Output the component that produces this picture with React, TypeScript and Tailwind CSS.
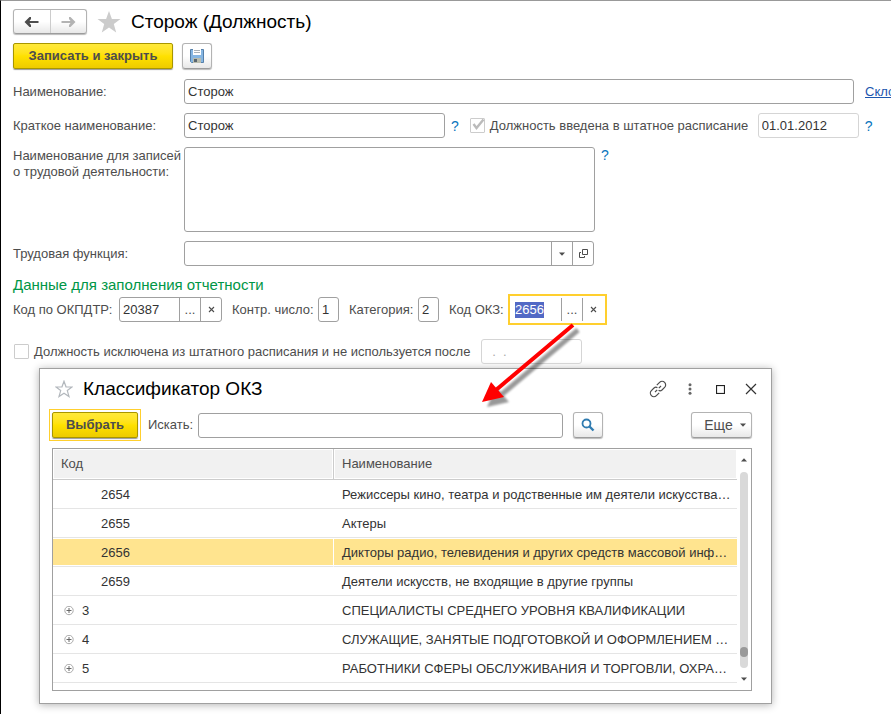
import { useEffect, useRef } from 'react';
import type { ReactNode } from 'react';

const rows = [
    { code: '2654', name: 'Режиссеры кино, театра и родственные им деятели искусства…', group: false },
    { code: '2655', name: 'Актеры', group: false },
    { code: '2656', name: 'Дикторы радио, телевидения и других средств массовой инф…', group: false },
    { code: '2659', name: 'Деятели искусств, не входящие в другие группы', group: false },
    { code: '3', name: 'СПЕЦИАЛИСТЫ СРЕДНЕГО УРОВНЯ КВАЛИФИКАЦИИ', group: true },
    { code: '4', name: 'СЛУЖАЩИЕ, ЗАНЯТЫЕ ПОДГОТОВКОЙ И ОФОРМЛЕНИЕМ …', group: true },
    { code: '5', name: 'РАБОТНИКИ СФЕРЫ ОБСЛУЖИВАНИЯ И ТОРГОВЛИ, ОХРА…', group: true },
];

const field = 'h-[25px] rounded-[3px] border border-[#a0a0a0] bg-white px-[3px] text-[#333] outline-none';
const grayButton =
    'flex items-center justify-center rounded-[3px] border border-[#b3b3b3] border-b-[#9c9c9c] bg-linear-to-b from-white from-50% to-[#e8e8e8] shadow-[0_1px_1px_#bbb]';
const yellowButton =
    'h-[26px] rounded-[2px] border border-[#a89600] bg-linear-to-b from-[#ffe93a] via-[#ffe100] to-[#edcb00] text-[13px] font-bold text-[#4d4d4d] shadow-[0_1px_1px_#999]';

function Help() {
    return (
        <button aria-label="Справка" className="text-[14px] leading-4 text-[#0a75bd]">
            ?
        </button>
    );
}

function Arrow({ right = false }: { right?: boolean }) {
    return (
        <svg width="15" height="12" viewBox="0 0 15 12" className={right ? 'rotate-180 text-[#b3b3b3]' : 'text-[#4d4d4d]'}>
            <path d="M0.500 6 5.500 1H7V3L5.500 5H14.500V7H5.500L7 9V11H5.500Z" fill="currentColor" />
        </svg>
    );
}

function Triangle({ up = false }: { up?: boolean }) {
    return (
        <svg width="6" height="4" viewBox="0 0 6 4" className={up ? 'rotate-180' : ''}>
            <path d="M0 0.500H6L3 3.800Z" fill="#4d4d4d" />
        </svg>
    );
}

function InnerButton({ label, children }: { label: string; children: ReactNode }) {
    return (
        <button
            aria-label={label}
            className="flex w-[21px] shrink-0 items-center justify-center self-stretch border-l border-[#a0a0a0] text-[13px] text-[#4d4d4d]"
        >
            {children}
        </button>
    );
}

function Cross() {
    return (
        <svg width="7" height="7" viewBox="0 0 7 7">
            <path d="M1 1 6 6M6 1 1 6" stroke="#4d4d4d" strokeWidth="1.100" />
        </svg>
    );
}

function Classifier() {
    return (
        <section
            aria-label="Классификатор ОКЗ"
            className="mt-1 mr-[119px] ml-[26px] flex flex-col border border-[#a0a0a0] bg-white pr-[19px] pb-3 pl-3 shadow-[0_1px_8px_rgba(0,0,0,0.3)]"
        >
            <div className="-mr-[5px] flex h-10 items-center">
                <svg width="18" height="18" viewBox="0 0 18 18" className="ml-[3px]">
                    <path
                        d="M9 1.200 11 6.800 17 7 12.300 10.600 14 16.500 9 13.200 4 16.500 5.700 10.600 1 7 7 6.800Z"
                        fill="none"
                        stroke="#b3b8bd"
                        strokeWidth="1.200"
                    />
                </svg>
                <h2 className="ml-[10px] flex-1 text-[19px] text-black">Классификатор ОКЗ</h2>
                <div className="flex items-center">
                    <button aria-label="Получить ссылку">
                        <svg width="18" height="18" viewBox="0 0 18 18" fill="none" stroke="#4d4d4d" strokeWidth="1.200">
                            <path d="M7.800 5.200 10.600 2.400A3.300 3.300 0 0 1 15.600 7.400L13 10Q11.300 11.400 9.600 10.300" />
                            <path d="M10.200 12.800 7.400 15.600A3.300 3.300 0 0 1 2.400 10.600L5 8Q6.700 6.600 8.400 7.700" />
                            <path d="M6 12 8.200 9.800M9.800 8.200 12 6" />
                        </svg>
                    </button>
                    <button aria-label="Меню" className="ml-[21px]">
                        <svg width="4" height="12" viewBox="0 0 4 12" fill="#666">
                            <circle cx="2" cy="1.700" r="1.500" />
                            <circle cx="2" cy="6" r="1.500" />
                            <circle cx="2" cy="10.300" r="1.500" />
                        </svg>
                    </button>
                    <button aria-label="Развернуть" className="ml-[24px]">
                        <svg width="9" height="9" viewBox="0 0 9 9">
                            <rect x="0.500" y="0.500" width="8" height="8" fill="none" stroke="#222" strokeWidth="1.200" />
                        </svg>
                    </button>
                    <button aria-label="Закрыть" className="ml-[20px]">
                        <svg width="12" height="12" viewBox="0 0 12 12">
                            <path d="M1 1 11 11M11 1 1 11" stroke="#333" strokeWidth="1.200" />
                        </svg>
                    </button>
                </div>
            </div>

            <div className="flex h-8 items-center">
                <div className="-ml-[3px] border border-[#ffcf2e] p-[2px]">
                    <button className={yellowButton + ' w-[86px]'}>Выбрать</button>
                </div>
                <label htmlFor="search" className="ml-[7px] w-[50px]">
                    Искать:
                </label>
                <input id="search" className={field + ' min-w-0 flex-1'} />
                <button aria-label="Найти" className={grayButton + ' ml-[10px] h-[26px] w-[30px]'}>
                    <svg width="14" height="14" viewBox="0 0 14 14" fill="none" stroke="#2f7bb0">
                        <circle cx="5.500" cy="5.500" r="4" strokeWidth="1.800" />
                        <path d="M8.500 8.500 12.500 12.500" strokeWidth="2.400" />
                    </svg>
                </button>
                <button className={grayButton + ' ml-[88px] h-[26px] w-[61px] gap-[7px] pl-[7px] text-[14px]'}>
                    Еще <Triangle />
                </button>
            </div>

            <div className="mt-[7px] flex border border-[#a0a0a0] pb-[7px]">
                <table className="min-w-0 flex-1 table-fixed border-separate border-spacing-0 text-[#333]">
                    <thead className="text-left text-[#4d4d4d]">
                        <tr className="h-[31px]">
                            <th className="w-[281px] border-r border-b border-[#ccc] bg-[#f1f1f1] px-2 font-normal shadow-[inset_0_0_0_1px_#fff]">
                                Код
                            </th>
                            <th className="border-b border-[#ccc] bg-[#f1f1f1] px-2 font-normal shadow-[inset_0_0_0_1px_#fff]">
                                Наименование
                            </th>
                        </tr>
                    </thead>
                    <tbody>
                        {rows.map((row) => (
                            <tr
                                key={row.code}
                                className={
                                    row.code === '2656'
                                        ? 'h-[29px] bg-[#ffe48f] *:shadow-[inset_0_1px_0_#fff,inset_0_-1px_0_#fff]'
                                        : 'h-[29px]'
                                }
                            >
                                <td
                                    className={
                                        row.code === '2656'
                                            ? 'border-r border-b border-r-white border-b-[#e5e5e5] pt-[2px] pl-12'
                                            : row.group
                                              ? 'border-b border-[#e5e5e5] pt-[2px] pl-[11px]'
                                              : 'border-b border-[#e5e5e5] pt-[2px] pl-12'
                                    }
                                >
                                    <span className="flex items-center gap-2">
                                        {row.group && (
                                            <svg width="10" height="10" viewBox="0 0 10 10" fill="none">
                                                <circle cx="5" cy="4.500" r="4.200" stroke="#aaa" />
                                                <path d="M5 2V7M2.500 4.500H7.500" stroke="#666" />
                                            </svg>
                                        )}
                                        {row.code}
                                    </span>
                                </td>
                                <td className="overflow-hidden border-b border-[#e5e5e5] pt-[2px] pl-2 whitespace-nowrap">
                                    {row.name}
                                </td>
                            </tr>
                        ))}
                    </tbody>
                </table>
                <div className="-mb-[7px] flex w-[14px] flex-col items-center pt-[9px] pb-[9px]">
                    <Triangle up />
                    <div className="mt-[10px] mb-[9px] flex w-2 flex-1 flex-col justify-end rounded-full bg-[#d9d9d9] pb-[11px]">
                        <div className="h-[10px] rounded-full bg-[#999]" />
                    </div>
                    <Triangle />
                </div>
            </div>
        </section>
    );
}

export default function App() {
    const okz = useRef<HTMLInputElement>(null);

    useEffect(() => {
        okz.current?.focus();
        okz.current?.select();
    }, []);

    return (
        <div className="relative min-h-screen overflow-hidden border-t border-l border-t-[#999] border-l-black bg-white pl-3 font-['Liberation_Sans',Arial,sans-serif] text-[13px] leading-4 text-[#4d4d4d]">
            <div className="mt-2 flex h-[25px] items-center">
                <div className={grayButton + ' h-[25px] w-[74px]'}>
                    <button aria-label="Назад" className="flex flex-1 justify-center">
                        <Arrow />
                    </button>
                    <button aria-label="Вперед" className="flex h-full flex-1 items-center justify-center border-l border-[#ccc]">
                        <Arrow right />
                    </button>
                </div>
                <svg width="24" height="22" viewBox="0 0 24 22" className="ml-[10px]">
                    <path d="M12 0 14.900 8H23.500L16.800 13 19.200 21.500 12 16.500 4.800 21.500 7.200 13 0.500 8H9.100Z" fill="#ccc" />
                </svg>
                <h1 className="ml-[10px] text-[19px] text-black">Сторож (Должность)</h1>
            </div>

            <div className="mt-[9px] flex gap-[9px]">
                <button className={yellowButton + ' w-[160px]'}>Записать и закрыть</button>
                <button aria-label="Записать" className={grayButton + ' h-[26px] w-[30px]'}>
                    <svg width="14" height="14" viewBox="0 0 14 14">
                        <path d="M0.500 0.500H13.500V13.500H1.500L0.500 12.500Z" fill="#86b6e2" stroke="#5580aa" />
                        <rect x="3" y="0" width="8" height="6" fill="#fff" />
                        <path d="M4 1.500H10M4 3.500H10" stroke="#aab2b8" />
                        <rect x="3" y="9" width="8" height="5" fill="#b9bcae" />
                        <rect x="4" y="10" width="3" height="3" fill="#58656f" />
                    </svg>
                </button>
            </div>

            <div className="mt-[10px] flex items-center">
                <label htmlFor="name" className="w-[171px] shrink-0">
                    Наименование:
                </label>
                <input id="name" defaultValue="Сторож" className={field + ' min-w-0 flex-1'} />
                <a href="#" className="ml-[11px] w-[26px] whitespace-nowrap text-[#1c55ae] underline">
                    Скло
                </a>
            </div>

            <div className="mt-[9px] flex items-center">
                <label htmlFor="short-name" className="w-[171px] shrink-0">
                    Краткое наименование:
                </label>
                <input id="short-name" defaultValue="Сторож" className={field + ' mr-[6px] w-[261px]'} />
                <Help />
                <label className="ml-[11px] flex w-[288px] items-center gap-[5px] whitespace-nowrap">
                    <span className="relative flex">
                        <input
                            type="checkbox"
                            defaultChecked
                            disabled
                            className="size-[15px] appearance-none rounded-[1px] border border-[#ccc]"
                        />
                        <svg width="13" height="13" viewBox="0 0 13 13" className="absolute top-0 left-[2px]">
                            <path d="M1.500 6 4.500 10 11.500 1.500" fill="none" stroke="#bbb" strokeWidth="2.400" />
                        </svg>
                    </span>
                    Должность введена в штатное расписание
                </label>
                <input
                    aria-label="Дата введения"
                    defaultValue="01.01.2012"
                    className="mr-[6px] h-[25px] w-[101px] rounded-[3px] border border-[#d5d5d5] px-[3px] text-[#333]"
                />
                <Help />
            </div>

            <div className="mt-[9px] flex items-start">
                <label htmlFor="record-name" className="w-[171px] shrink-0 pt-px whitespace-nowrap">
                    Наименование для записей
                    <br />о трудовой деятельности:
                </label>
                <textarea
                    id="record-name"
                    className="mr-[6px] h-[85px] w-[411px] resize-none rounded-[3px] border border-[#a0a0a0] outline-none"
                />
                <Help />
            </div>

            <div className="mt-[9px] flex items-center">
                <label htmlFor="work-function" className="w-[171px] shrink-0">
                    Трудовая функция:
                </label>
                <div className="flex h-[25px] w-[410px] rounded-[3px] border border-[#a0a0a0]">
                    <input id="work-function" className="min-w-0 flex-1 px-[3px] outline-none" />
                    <InnerButton label="Выбрать из списка">
                        <Triangle />
                    </InnerButton>
                    <InnerButton label="Открыть">
                        <svg width="9" height="9" viewBox="0 0 9 9" fill="none" stroke="#4d4d4d">
                            <path d="M3.500 0.500H8.500V5.500H3.500ZM2 3.500H0.500V8.500H5.500V7" />
                        </svg>
                    </InnerButton>
                </div>
            </div>

            <h2 className="mt-[9px] text-[15px] leading-[19px] text-[#009646]">Данные для заполнения отчетности</h2>

            <div className="flex h-[31px] items-center whitespace-nowrap">
                <label htmlFor="okpdtr" className="w-[106px]">
                    Код по ОКПДТР:
                </label>
                <div className="flex h-[25px] w-[103px] rounded-[3px] border border-[#a0a0a0]">
                    <input id="okpdtr" defaultValue="20387" className="min-w-0 flex-1 px-[3px] text-[#333] outline-none" />
                    <InnerButton label="Выбрать код">...</InnerButton>
                    <InnerButton label="Очистить">
                        <Cross />
                    </InnerButton>
                </div>
                <label htmlFor="control" className="ml-[10px] w-[86px]">
                    Контр. число:
                </label>
                <input id="control" defaultValue="1" className={field + ' w-[21px]'} />
                <label htmlFor="category" className="ml-[10px] w-[69px]">
                    Категория:
                </label>
                <input id="category" defaultValue="2" className={field + ' w-[21px]'} />
                <label htmlFor="okz" className="ml-[10px] w-[59px]">
                    Код ОКЗ:
                </label>
                <div className="flex h-[31px] w-[99px] border-2 border-[#ffcf2e] py-[2px] pr-[2px] pl-[5px]">
                    <input
                        id="okz"
                        ref={okz}
                        defaultValue="2656"
                        className="min-w-0 flex-1 text-[#333] outline-none selection:bg-[#5269c5] selection:text-white"
                    />
                    <InnerButton label="Выбрать ОКЗ">...</InnerButton>
                    <InnerButton label="Очистить ОКЗ">
                        <Cross />
                    </InnerButton>
                </div>
            </div>

            <div className="mt-[14px] flex items-center">
                <label className="flex w-[468px] items-center gap-[5px] whitespace-nowrap">
                    <input
                        type="checkbox"
                        className="ml-px size-[15px] appearance-none rounded-[1px] border border-[#ccc]"
                    />
                    Должность исключена из штатного расписания и не используется после
                </label>
                <input
                    aria-label="Дата исключения"
                    defaultValue="  .  ."
                    className="h-[25px] w-[101px] rounded-[3px] border border-[#d5d5d5] px-[3px] text-[#aaa]"
                />
            </div>

            <Classifier />

            <svg width="130" height="110" viewBox="0 0 130 110" className="pointer-events-none absolute top-[314px] left-[469px]">
                <g className="blur-[1px]" opacity="0.400" transform="translate(5 5)">
                    <path d="M103 10 26 75" stroke="#000" strokeWidth="5" />
                    <path d="M12 87 21 67 34 82Z" fill="#000" />
                </g>
                <path d="M103 10 26 75" stroke="#f00" strokeWidth="4" />
                <path d="M12 87 21 67 34 82Z" fill="#f00" />
            </svg>
        </div>
    );
}
